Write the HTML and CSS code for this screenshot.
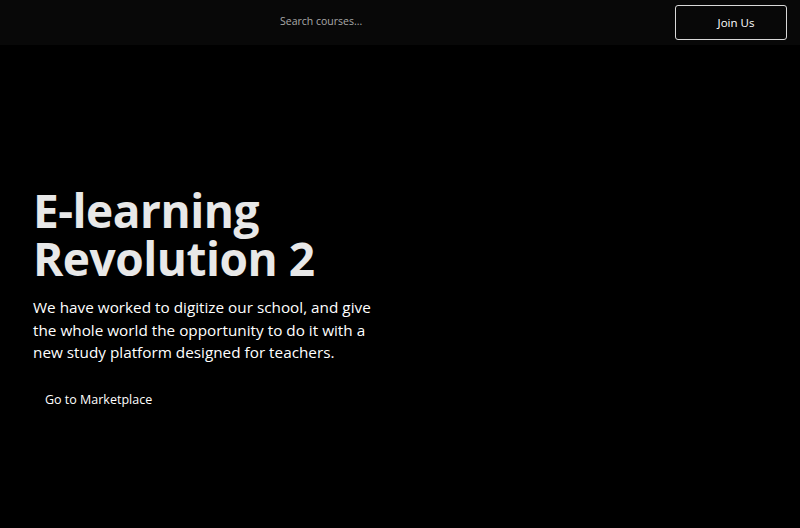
FILE: index.html
```html
<!DOCTYPE html>
<html lang="en">
<head>
<meta charset="utf-8">
<title>E-learning Revolution 2</title>
<link rel="stylesheet" href="styles.css">
</head>
<body>
<header class="topbar">
  <div class="search">Search courses...</div>
  <button class="join">Join Us</button>
</header>
<main class="hero">
  <div class="hero-text">
    <h1 class="title"><span class="title-line">E-learning</span><span class="title-line">Revolution 2</span></h1>
    <p class="lead">We have worked to digitize our school, and give the whole world the opportunity to do it with a new study platform designed for teachers.</p>
    <a class="cta" href="#">Go to Marketplace</a>
  </div>
</main>
</body>
</html>
```
FILE: styles.css
```css
* { box-sizing: border-box; }
html, body { margin: 0; padding: 0; }
body {
  background: #000;
  color: #fff;
  font-family: "Open Sans", "Noto Sans", sans-serif;
  width: 800px;
  height: 528px;
  overflow: hidden;
}
.topbar {
  height: 45px;
  background: #080808;
  display: flex;
  align-items: center;
  padding: 0 13px 0 280px;
}
.search {
  color: #a8a8a8;
  font-size: 10.5px;
  flex: 1;
  margin-top: -3px;
}
.join {
  width: 112px;
  height: 35px;
  background: transparent;
  border: 1px solid #d8d8d8;
  border-radius: 3px;
  color: #fff;
  font-family: inherit;
  font-size: 11.5px;
  padding: 0 0 0 10px;
}
.hero {
  padding: 141px 33px 0;
}
.hero-text { width: 360px; }
.title {
  margin: 0 0 14px;
  font-size: 46px;
  line-height: 48px;
  font-weight: 700;
  color: #e8e8e8;
  letter-spacing: -0.5px;
}
.title-line { display: block; }
.lead {
  margin: 0 0 23px;
  font-size: 15.3px;
  line-height: 22.5px;
  color: #fff;
}
.cta {
  display: inline-block;
  margin-left: 12px;
  color: #fff;
  text-decoration: none;
  font-size: 12.5px;
}
```
